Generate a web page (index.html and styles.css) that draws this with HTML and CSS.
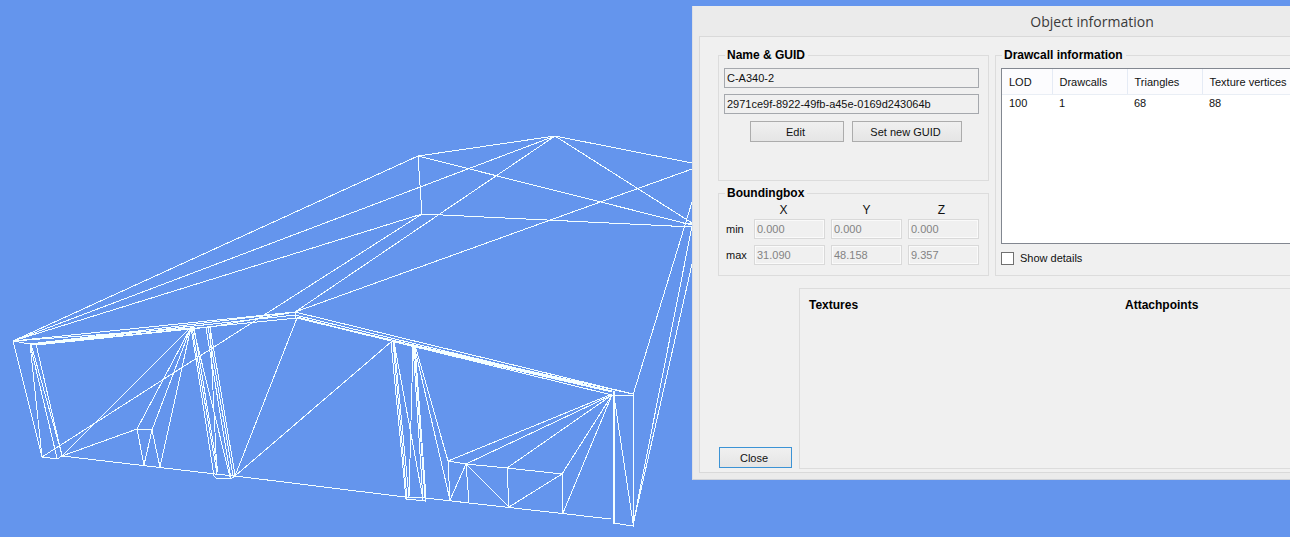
FILE: index.html
```
<!DOCTYPE html>
<html lang="en">
<head>
<meta charset="utf-8">
<title>Object information</title>
<link rel="stylesheet" href="styles.css">
</head>
<body>
<main class="viewport">
  <svg class="wireframe" width="692" height="537" viewBox="0 0 692 537" role="img" aria-label="Wireframe model">
    <g>
      <!-- roof -->
      <path d="M13 341L418 156L555 136L692 163M13 341L555 136M13 341L422 214L692 227M418 156L422 214M418 156L692 225M555 136L692 223M555 136L295 312L692 169M422 214L42 457M683 224L692 223"/>
      <!-- left eaves -->
      <path d="M13 341L295 312M30 344L295 312M30 344L295 315M36 344L297 318M13 341L192 328M36 345L210 327L295 312M30 345L192 326M13 341L30 344H36M295 312V318"/>
      <!-- right eaves -->
      <path d="M295 312L633 394M295 315L612 391M297 318L612 391M297 318L612 395M391 341L612 391M413 345L633 394M415 347L612 392M297 317L415 347M612 395H633"/>
      <!-- left corner post -->
      <path d="M13 341L42 457L57 459L62 456M30 344L42 457M30 344L57 458M31 344L62 455M36 344L62 456"/>
      <!-- left bay -->
      <path d="M62 456L137 429L152 430L160 467M137 429L144 465L152 430M191 327L62 456M191 327L137 429M191 327L152 430M191 327L160 467M62 456L215 474L235 476L405 497L425 498L611 519"/>
      <!-- second post -->
      <path d="M191 327L214 476L216 478L231 479L235 476M192 327L217 474M194 327L218 472M193 327L230 477M206 328L231 479M208 327L233 476M210 327L235 475M210 327L217 474"/>
      <!-- centre bay -->
      <path d="M297 318L235 476L391 342"/>
      <!-- third post -->
      <path d="M391 342L406 499L425 501V497M393 341L407 499M394 342L409 497M394 342L423 499M413 345L409 497M413 345L423 500M414 345L425 498M415 345L426 498"/>
      <!-- right bay -->
      <path d="M414 345L450 500M415 345L448 461L450 500L466 464L469 503M448 461L466 464L507 468L562 474L563 513M466 464L509 507L507 468M509 507L562 474M612 394L448 461M612 395L466 464M612 395L507 468M612 395L562 474M612 395L563 513"/>
      <!-- right corner post and side wall -->
      <path d="M613 391V523L633 526V395L692 202M614 391V523M614 396L633 523M633 525L692 226M633 525L657 419L692 264"/>
    </g>
  </svg>

  <section class="dialog" aria-labelledby="dialog-title">
    <h1 class="dialog-title" id="dialog-title">Object information</h1>
    <form class="client">
      <div class="groups">
        <div class="identity">
          <fieldset class="group group-name">
            <legend>Name &amp; GUID</legend>
            <input class="field" type="text" aria-label="Name" value="C-A340-2" readonly>
            <input class="field" type="text" aria-label="GUID" value="2971ce9f-8922-49fb-a45e-0169d243064b" readonly>
            <div class="actions">
              <button class="button button-edit" type="button">Edit</button>
              <button class="button button-guid" type="button">Set new GUID</button>
            </div>
          </fieldset>
          <fieldset class="group group-box">
            <legend>Boundingbox</legend>
            <div class="bounds">
              <span></span><span class="axis axis-x">X</span><span class="axis">Y</span><span class="axis axis-z">Z</span>
              <span>min</span>
              <input class="field" aria-label="min X" value="0.000" disabled>
              <input class="field" aria-label="min Y" value="0.000" disabled>
              <input class="field" aria-label="min Z" value="0.000" disabled>
              <span>max</span>
              <input class="field" aria-label="max X" value="31.090" disabled>
              <input class="field" aria-label="max Y" value="48.158" disabled>
              <input class="field" aria-label="max Z" value="9.357" disabled>
            </div>
          </fieldset>
        </div>
        <fieldset class="group group-calls">
          <legend>Drawcall information</legend>
          <div class="list">
            <table>
              <thead>
                <tr><th class="col-lod">LOD</th><th class="col-count">Drawcalls</th><th class="col-count">Triangles</th><th>Texture vertices</th></tr>
              </thead>
              <tbody>
                <tr><td>100</td><td>1</td><td>68</td><td>88</td></tr>
              </tbody>
            </table>
          </div>
          <label class="details"><input type="checkbox">Show details</label>
        </fieldset>
      </div>
      <div class="lower">
        <button class="button button-close" type="button">Close</button>
        <div class="panel">
          <h2>Textures</h2>
          <h2>Attachpoints</h2>
        </div>
      </div>
    </form>
  </section>
</main>
</body>
</html>
```
FILE: styles.css
```
* {
  box-sizing: border-box;
}

body {
  margin: 0;
  background: #6495ed;
  color: #111;
  font: 11px/14px "Liberation Sans", Arial, sans-serif;
}

.viewport {
  position: relative;
  min-height: 100vh;
  overflow: hidden;
}

.wireframe {
  display: block;
  fill: none;
  stroke: #f4ffff;
  stroke-width: 1;
  shape-rendering: crispEdges;
}

/* The window is wider than the space left of the viewport's right edge. */
.dialog {
  position: absolute;
  left: 692px;
  top: 6px;
  width: 800px;
  padding: 0 7px 6px 6px;
  background: #ebebeb;
  border-left: 1px solid #dcdfe6;
  border-bottom: 1px solid #cfd2d8;
}

.dialog-title {
  margin: 0;
  padding-top: 1px;
  color: #3a3a3a;
  font: 400 14px/29px "Open Sans", "Noto Sans", sans-serif;
  text-align: center;
}

.client {
  padding: 11px 18px 3px;
  background: #f0f0f0;
  border: 1px solid #d9d9d9;
}

.groups {
  display: grid;
  grid-template-columns: 271px 1fr;
  gap: 6px;
}

.identity {
  display: flex;
  flex-direction: column;
  gap: 5px;
}

.group {
  min-width: 0;
  margin: 0;
  padding: 6px 9px 10px 5px;
  border: 1px solid #dcdcdc;
}

.group legend {
  margin-left: 1px;
  padding: 0 3px 0 2px;
}

.group legend,
.panel h2 {
  color: #000;
  font-size: 12px;
  font-weight: 700;
  line-height: 14px;
}

.group-name {
  display: flex;
  flex-direction: column;
  gap: 6px;
  padding-bottom: 38px;
}

.field {
  display: block;
  width: 100%;
  min-width: 0;
  height: 20px;
  padding: 0 2px;
  border: 1px solid #a5a8ad;
  border-radius: 0;
  background: #f0f0f0;
  color: #111;
  font: inherit;
}

.field:disabled {
  border-color: #d9d9d9;
  box-shadow: inset 0 0 0 1px #fafafa;
  color: #838383;
}

.actions {
  display: flex;
  gap: 8px;
  margin-top: 1px;
  padding-left: 26px;
}

.button {
  height: 21px;
  padding: 0 3px 0 0;
  border: 1px solid #acacac;
  border-radius: 0;
  background: linear-gradient(#f0f0f0, #e5e5e5);
  color: #111;
  font: inherit;
}

.button-edit {
  width: 94px;
}

.button-guid {
  width: 110px;
}

.group-box {
  padding-top: 4px;
}

.bounds {
  display: grid;
  grid-template-columns: 22px repeat(3, 1fr);
  align-items: center;
  gap: 6px;
  padding-left: 2px;
}

.axis {
  margin-bottom: -3px;
  font-size: 12px;
  line-height: 12px;
  text-align: center;
}

.axis-x {
  padding-right: 12px;
}

.axis-z {
  padding-right: 4px;
}

.group-calls {
  display: flex;
  flex-direction: column;
  gap: 7px;
}

.list {
  flex: 1;
  background: #fff;
  border: 1px solid #828790;
}

table {
  width: 100%;
  border-collapse: collapse;
  table-layout: fixed;
}

th,
td {
  padding: 0 7px;
  font-weight: 400;
  text-align: left;
}

th {
  height: 25px;
  padding-top: 1px;
  background: #fcfcfe;
  border-right: 1px solid #e5ebf5;
  border-bottom: 1px solid #e9eef5;
}

td {
  height: 18px;
}

.col-lod {
  width: 50px;
}

.col-count {
  width: 75px;
}

.details {
  display: flex;
  align-items: center;
  align-self: flex-start;
  gap: 6px;
}

.details input {
  width: 13px;
  height: 13px;
  margin: 0;
  appearance: none;
  background: #fff;
  border: 1px solid #707070;
}

.lower {
  display: flex;
  align-items: flex-end;
  gap: 7px;
  margin-top: 12px;
  padding-left: 1px;
}

.button-close {
  width: 73px;
  margin-bottom: 1px;
  border-color: #3c93d5;
}

.panel {
  flex: 1;
  display: grid;
  grid-template-columns: 316px 1fr;
  min-height: 181px;
  padding: 9px;
  border: 1px solid #dcdcdc;
}

.panel h2 {
  margin: 0;
}
```
